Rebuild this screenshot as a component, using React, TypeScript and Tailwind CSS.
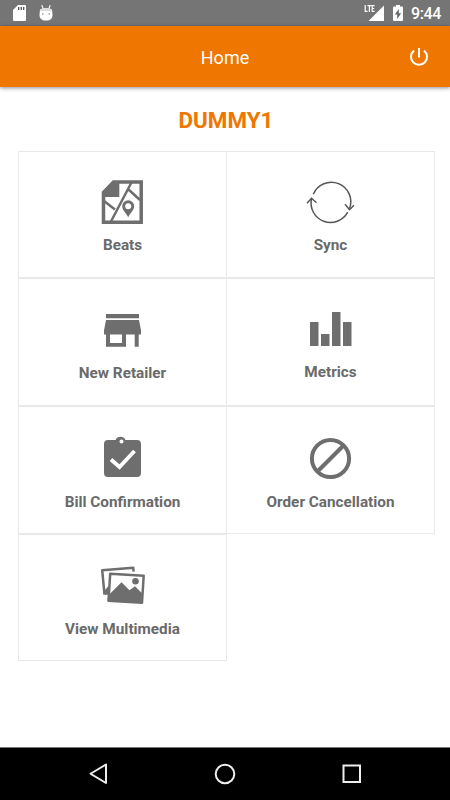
import React from "react";

const StatusBar: React.FC = () => (
  <div className="flex h-[26px] items-center justify-between bg-[#757575] pr-[9px] pl-[13px]">
    <div className="flex items-center gap-[13px]">
      <svg width="13" height="16" viewBox="0 0 13 16">
        <path
          d="M5 0h7a1 1 0 0 1 1 1v14a1 1 0 0 1-1 1H1a1 1 0 0 1-1-1V5z"
          fill="#fff"
        />
        <path d="M5.7 2v3M8.3 2v3M10.7 2v3" stroke="#555" strokeWidth="1.3" />
      </svg>
      <svg width="14" height="16" viewBox="0 0 14 16">
        <path
          d="M3 .5l1 3M11 .5l-1 3"
          stroke="#eee"
          strokeWidth="1.2"
          strokeLinecap="round"
        />
        <path
          d="M1 4.500Q3 3 7 3t6 1.500L13.500 10c0 3.500-2 5.600-6.500 5.600S.5 13.500.5 10z"
          fill="#fff"
        />
        <path d="M1 4.500Q3 3 7 3t6 1.500V6H1z" fill="#ddd" />
        <circle cx="3.800" cy="9" r="0.8" fill="#888" />
        <circle cx="10.200" cy="9" r="0.8" fill="#888" />
      </svg>
    </div>
    <div className="flex items-center">
      <svg width="20" height="18" viewBox="0 0 20 18" className="mr-[9px]">
        <path d="M20 1.5V17H4.5z" fill="#fff" />
        <path d="M0 0h11v9H0z" fill="#757575" />
        <path
          d="M1.2 1v7M.6 7.4h3M3.4 1.6h4M5.4 1v7M8.2 1v7M7.6 1.6h3M7.6 4.5h2.6M7.6 7.4h3"
          fill="none"
          stroke="#fff"
          strokeWidth="1.2"
        />
      </svg>
      <svg width="10" height="16" viewBox="0 0 10 16" className="mr-[8px]">
        <path
          d="M3 0h4v1.6h2a1 1 0 0 1 1 1V15a1 1 0 0 1-1 1H1a1 1 0 0 1-1-1V2.600a1 1 0 0 1 1-1h2z"
          fill="#fff"
        />
        <path d="M5.800 4L1.800 9.500h2.400V14l4-5.700H5.800z" fill="#666" />
      </svg>
      <span className="pt-px text-[16px] leading-none font-medium tracking-[-0.4px] text-white">
        9:44
      </span>
    </div>
  </div>
);

const Header: React.FC = () => (
  <header className="grid h-[61px] grid-cols-[1fr_auto_1fr] items-center bg-[#ef7600] shadow-[0_1px_4px_rgba(0,0,0,0.45)]">
    <span />
    <h1 className="pt-[2px] text-[18px] leading-6 text-white">Home</h1>
    <button className="mr-[21px] justify-self-end" aria-label="Log out">
      <svg
        width="20"
        height="20"
        viewBox="0 0 20 20"
        fill="none"
        stroke="#fff"
        strokeWidth="2"
      >
        <path d="M10 1v9.500M5 3.600a8 8 0 1 0 10 0" />
      </svg>
    </button>
  </header>
);

const BeatsIcon = () => (
  <>
    <path
      d="M21.500 10h27.700v40.300H11.500V20.500z"
      fill="none"
      stroke="#6e6e6e"
      strokeWidth="3.500"
    />
    <path d="M21 9h6.300v16H10v-4.500z" fill="#6e6e6e" />
    <path
      d="M39.700 10L18.700 50M12 29l11 8.500M36 17l12 11"
      fill="none"
      stroke="#6e6e6e"
      strokeWidth="2.500"
    />
    <path
      d="M36.200 45.300c-1.500-3.700-6-7-6-11a6 6 0 0 1 12 0c0 4-4.500 7.300-6 11z"
      fill="#6e6e6e"
    />
    <circle cx="36.200" cy="34.200" r="3" fill="#fff" />
  </>
);

const SyncIcon = () => (
  <g
    fill="none"
    stroke="#555"
    strokeWidth="1.500"
    transform="translate(0 0.7)"
  >
    <path d="M13.300 21.500A19.500 19.500 0 0 1 49.500 36" />
    <path d="M47.700 39.500A19.500 19.500 0 0 1 11.500 26" />
    <path d="M7 30.500l4.500-5 5 4.500M45 31.500l4.500 5.500 4.500-4.500" />
  </g>
);

const StoreIcon = () => (
  <g fill="#6e6e6e">
    <path d="M14 16h33v4.200H14z" />
    <path d="M14 22h33l2 10.500v4h-2.300v12.300h-4V36.500H34v12.300H14V36.500h-2v-4z" />
    <path d="M18 36.500h12V45H18z" fill="#fff" />
  </g>
);

const MetricsIcon = () => (
  <path
    d="M10 24h8.500v24H10zM21 36h8.500v12H21zM32 14h8.500v34H32zM43 24h8.500v24H43z"
    fill="#6e6e6e"
  />
);

const BillIcon = () => (
  <>
    <path
      d="M14 14h9.500a5.500 5.500 0 0 1 10 0H45a4 4 0 0 1 4 4v29a4 4 0 0 1-4 4H16a4 4 0 0 1-4-4V18a4 4 0 0 1 4-4z"
      fill="#6e6e6e"
    />
    <circle cx="29.500" cy="15.500" r="2" fill="#fff" />
    <path
      d="M19 33.500l8.500 7.500L42.500 25"
      fill="none"
      stroke="#fff"
      strokeWidth="3.800"
    />
  </>
);

const CancelIcon = () => (
  <g fill="none" stroke="#6e6e6e" strokeWidth="4">
    <circle cx="30.500" cy="32.500" r="18.600" />
    <path d="M17.500 45.500l26-26" />
  </g>
);

const MultimediaIcon = () => (
  <g transform="translate(0.5 0.7)">
    <path
      d="M12 40L9.700 15.500l31-2.500.4 4"
      fill="none"
      stroke="#6e6e6e"
      strokeWidth="2.500"
      strokeLinejoin="round"
    />
    <path d="M12 36l4-5v9h-3.500z" fill="#6e6e6e" />
    <path
      d="M17.700 19l33.500 2-1.700 27-33.500-2z"
      fill="#fff"
      stroke="#6e6e6e"
      strokeWidth="2.500"
      strokeLinejoin="round"
    />
    <path
      d="M16.500 40l12.500-12.500 8 8 5.500-4 8 8-1 8L16 46z"
      fill="#6e6e6e"
    />
    <circle cx="43" cy="26.500" r="3.300" fill="#6e6e6e" />
  </g>
);

const tiles = [
  { label: "Beats", Icon: BeatsIcon, padding: "pt-[20px]", gap: "mt-[3px]" },
  { label: "Sync", Icon: SyncIcon, padding: "pt-[20px]", gap: "mt-[3px]" },
  { label: "New Retailer", Icon: StoreIcon, padding: "pt-[19px]", gap: "mt-[5px]" },
  { label: "Metrics", Icon: MetricsIcon, padding: "pt-[19px]", gap: "mt-[4px]" },
  { label: "Bill Confirmation", Icon: BillIcon, padding: "pt-[19px]", gap: "mt-[6px]" },
  { label: "Order Cancellation", Icon: CancelIcon, padding: "pt-[19px]", gap: "mt-[6px]" },
  { label: "View Multimedia", Icon: MultimediaIcon, padding: "pt-[19px]", gap: "mt-[5px]" },
];

const NavBar: React.FC = () => (
  <nav className="flex h-[53px] items-center justify-between border-t border-[#777] bg-black px-[88px]">
    <svg width="20" height="22" viewBox="0 0 20 22" className="shrink-0">
      <path
        d="M18 1.500v18.500L2.500 10.750z"
        fill="none"
        stroke="#eee"
        strokeWidth="2"
        strokeLinejoin="round"
      />
    </svg>
    <svg width="22" height="22" viewBox="0 0 22 22">
      <circle
        cx="11"
        cy="11"
        r="9.300"
        fill="none"
        stroke="#eee"
        strokeWidth="2"
      />
    </svg>
    <svg width="20" height="20" viewBox="0 0 20 20">
      <rect
        x="1.500"
        y="1.500"
        width="16.500"
        height="16.500"
        fill="none"
        stroke="#eee"
        strokeWidth="2"
      />
    </svg>
  </nav>
);

export default function App() {
  return (
    <div className="flex h-[800px] w-[450px] flex-col bg-white font-['Roboto',sans-serif]">
      <StatusBar />
      <Header />
      <main className="flex-1">
        <h2 className="mt-[19px] mb-[17px] pl-[2px] text-center text-[22.4px] leading-7 font-bold text-[#ef7600]">
          DUMMY1
        </h2>
        <div className="ml-[18px] grid grid-cols-[208px_208px] grid-rows-[127px_128px_128px_127px]">
          {tiles.map(({ label, Icon, padding, gap }) => (
            <div
              key={label}
              className={`-mr-px flex flex-col items-center border border-[#e9e9e9] pr-px ${padding}`}
            >
              <svg width="60" height="60" viewBox="0 0 60 60">
                <Icon />
              </svg>
              <span
                className={`pl-px text-[15.3px] leading-5 font-bold text-[#6a6a6a] ${gap}`}
              >
                {label}
              </span>
            </div>
          ))}
        </div>
      </main>
      <NavBar />
    </div>
  );
}
